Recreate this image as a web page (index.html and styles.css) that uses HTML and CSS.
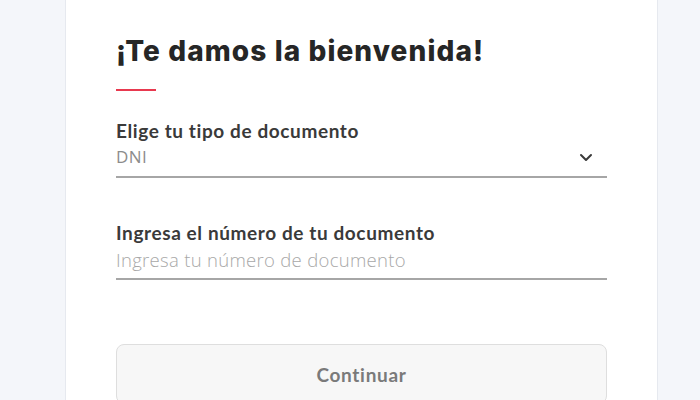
FILE: index.html
```html
<!DOCTYPE html>
<html lang="es">
<head>
<meta charset="utf-8">
<title>Bienvenida</title>
<link rel="stylesheet" href="styles.css">
</head>
<body>
<main class="card">
  <h1 class="title">¡Te damos la bienvenida!</h1>
  <div class="accent"></div>
  <div class="field">
    <label class="label">Elige tu tipo de documento</label>
    <div class="control control-select">
      <span class="value">DNI</span>
      <svg class="chevron" width="14" height="9" viewBox="0 0 14 9"><path d="M2 2l5 5 5-5" fill="none" stroke="#3a3a3a" stroke-width="2" stroke-linecap="round" stroke-linejoin="round"/></svg>
    </div>
  </div>
  <div class="field field-second">
    <label class="label">Ingresa el número de tu documento</label>
    <div class="control control-input">
      <span class="placeholder">Ingresa tu número de documento</span>
    </div>
  </div>
  <button class="button" type="button">Continuar</button>
</main>
</body>
</html>
```
FILE: styles.css
```css
html, body {
  margin: 0;
  padding: 0;
}
body {
  background: #f4f6fa;
  font-family: "Lato", "Open Sans", sans-serif;
  height: 400px;
  overflow: hidden;
}
.card {
  box-sizing: border-box;
  margin-left: 65px;
  width: 593px;
  min-height: 420px;
  background: #ffffff;
  border-left: 1px solid #e6e9ef;
  border-right: 1px solid #e6e9ef;
  padding: 33px 50px 0 50px;
}
.title {
  margin: 0;
  font-family: "Inter", "Lato", sans-serif;
  font-weight: 800;
  font-size: 28px;
  line-height: 36px;
  color: #262626;
  letter-spacing: 1.1px;
}
.accent {
  width: 40px;
  height: 2px;
  background: #e8394f;
  margin-top: 20px;
}
.field {
  margin-top: 28px;
}
.field-second {
  margin-top: 43px;
}
.label {
  display: block;
  font-family: "Lato", "Open Sans", sans-serif;
  font-weight: 700;
  font-size: 19px;
  line-height: 24px;
  letter-spacing: 0.6px;
  color: #3a3a3a;
}
.control {
  display: flex;
  align-items: center;
  justify-content: space-between;
  border-bottom: 2px solid #a6a6a6;
  line-height: 24px;
}
.control-select {
  padding: 2px 0 7px 0;
}
.control-input {
  padding: 3px 0 6px 0;
}
.value {
  font-family: "Open Sans", sans-serif;
  font-size: 17px;
  font-weight: 400;
  letter-spacing: 0.4px;
  color: #8c8c8c;
}
.placeholder {
  font-family: "Open Sans", sans-serif;
  font-size: 18.5px;
  font-weight: 300;
  letter-spacing: 0.3px;
  color: #a8a8a8;
}
.chevron {
  margin-right: 14px;
}
.button {
  display: block;
  box-sizing: border-box;
  width: 100%;
  height: 60px;
  margin-top: 64px;
  border: 1px solid #dedede;
  border-radius: 8px;
  background: #f7f7f7;
  font-family: "Lato", "Open Sans", sans-serif;
  font-weight: 700;
  font-size: 19px;
  letter-spacing: 0.7px;
  color: #7a7a7a;
}
```
